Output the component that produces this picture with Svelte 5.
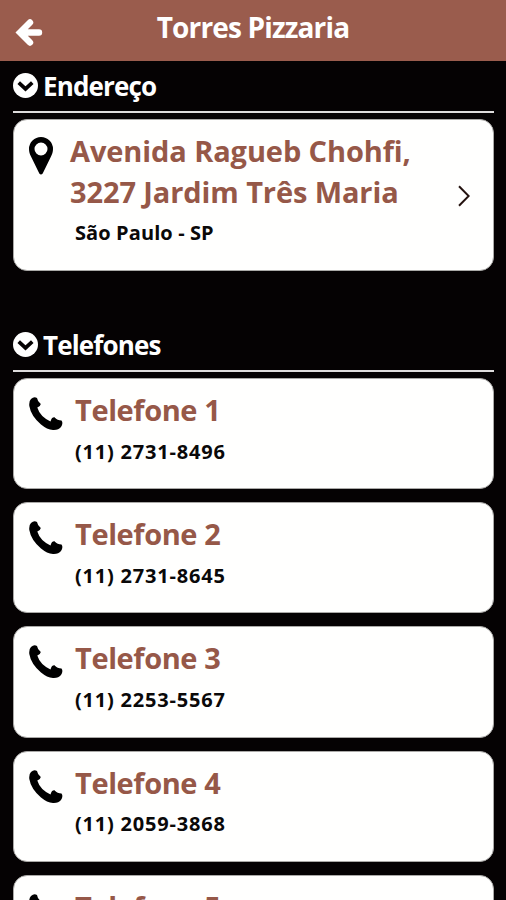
<script lang="ts">
	const name = 'Torres Pizzaria';
	const address = {
		lines: ['Avenida Ragueb Chohfi,', '3227 Jardim Três Maria'],
		city: 'São Paulo - SP'
	};
	const phones = ['(11) 2731-8496', '(11) 2731-8645', '(11) 2253-5567', '(11) 2059-3868', '(11) 2059-3869'];
</script>

{#snippet heading(label: string)}
	<h2 class="section-title">
		<svg class="toggle" viewBox="0 0 24 24" aria-hidden="true">
			<circle cx="12" cy="12" r="12" fill="#fff" />
			<path d="M5.5 9.3 12 15.3l6.5-6" fill="none" stroke="#050203" stroke-width="3.6" />
		</svg>
		<span>{label}</span>
	</h2>
{/snippet}

<div class="screen">
	<header class="topbar">
		<button class="back" aria-label="Voltar">
			<svg viewBox="0 0 28 28" aria-hidden="true">
				<path d="M15 4.5 5 14.500l10 10M5.500 14.500h18.500" fill="none" stroke="#fff" stroke-width="6.4" stroke-linecap="round" />
			</svg>
		</button>
		<h1>{name}</h1>
	</header>

	<section class="address">
		{@render heading('Endereço')}
		<div class="card card-address">
			<svg class="pin" viewBox="0 0 24 38" aria-hidden="true">
				<path d="M12 0a12 12 0 0 1 12 12c0 3-.8 5-2 7.5L13.7 36.5q-1.7 2-3.4 0L2 19.5C.8 17 0 15 0 12A12 12 0 0 1 12 0zm0 5.500a6.500 6.500 0 1 0 0 13A6.500 6.500 0 0 0 12 5.500z" />
			</svg>
			<div class="info">
				<div class="title">
					{#each address.lines as line}
						<div>{line}</div>
					{/each}
				</div>
				<div class="detail">{address.city}</div>
			</div>
			<svg class="chevron" viewBox="0 0 12 22" aria-hidden="true">
				<path d="M1 1.2 10.700 11 1 20.800" fill="none" stroke="#24120f" stroke-width="2" />
			</svg>
		</div>
	</section>

	<section>
		{@render heading('Telefones')}
		<div class="list">
			{#each phones as phone, i}
				<div class="card card-phone">
					<svg class="handset" viewBox="0 0 34 34" aria-hidden="true">
						<path d="M2 2Q5-.7 8 1Q8.500 4.500 11.800 7Q11.500 9.500 8.300 10.500Q11 19.500 21.500 24.500Q22.500 20 25.500 20.200Q28.500 23.500 32.500 23.500Q34.500 26 32 30Q29.500 33.300 24 33Q18 32.500 12 27.500Q2 19 .3 9Q-.2 4 2 2Z" />
					</svg>
					<div class="info">
						<div class="title">Telefone {i + 1}</div>
						<div class="detail">{phone}</div>
					</div>
				</div>
			{/each}
		</div>
	</section>
</div>

<style>
	:global(body) {
		background: #050203;
	}

	.screen {
		height: 900px;
		overflow: hidden;
		background: #050203;
		font-family: 'Open Sans', 'Noto Sans', sans-serif;
		font-weight: 700;
	}

	.topbar {
		display: grid;
		grid-template-columns: 60px 1fr 60px;
		height: 61px;
		background: #9a5c4d;
	}

	.back {
		display: flex;
		padding: 18px 0 0 15px;
		border: 0;
		background: none;
	}

	.back svg {
		width: 28px;
		height: 28px;
	}

	h1 {
		margin: 0;
		color: #fff;
		font-size: 28px;
		line-height: 55px;
		letter-spacing: -0.85px;
		text-align: center;
		white-space: nowrap;
	}

	section {
		padding: 0 12px 0 13px;
	}

	.address {
		height: 259px;
	}

	.section-title {
		display: flex;
		align-items: center;
		gap: 5px;
		height: 50px;
		margin: 0 0 6px;
		border-bottom: 2px solid #dedcdc;
		color: #fff;
		font-size: 26px;
		line-height: 50px;
		letter-spacing: -0.85px;
	}

	.toggle {
		width: 25px;
		height: 25px;
		margin-top: -1px;
	}

	.card {
		display: flex;
		box-sizing: border-box;
		border: 1px solid #aaa9a7;
		border-radius: 14px;
		background: #fffffe;
	}

	.card-address {
		height: 152px;
		padding: 11px 23px 0 15px;
	}

	.card-phone {
		height: 111.2px;
		padding: 11px 15px 0 15px;
	}

	.list {
		display: grid;
		gap: 13px;
	}

	.pin {
		width: 24px;
		height: 38px;
		margin-top: 6px;
	}

	.handset {
		width: 34px;
		height: 34px;
		margin-top: 7px;
	}

	.info {
		flex: 1;
		padding-left: 12px;
		white-space: nowrap;
	}

	.card-address .info {
		padding-left: 17px;
	}

	.title {
		color: #965848;
		font-size: 29px;
		line-height: 40.5px;
		letter-spacing: -0.4px;
	}

	.card-address .title {
		letter-spacing: -0.1px;
	}

	.detail {
		color: #0a0909;
		font-size: 20px;
		line-height: 41px;
		letter-spacing: 0.8px;
	}

	.card-address .detail {
		padding-left: 5px;
		letter-spacing: 0.1px;
	}

	.chevron {
		width: 12px;
		height: 22px;
		margin-top: 54px;
	}
</style>
